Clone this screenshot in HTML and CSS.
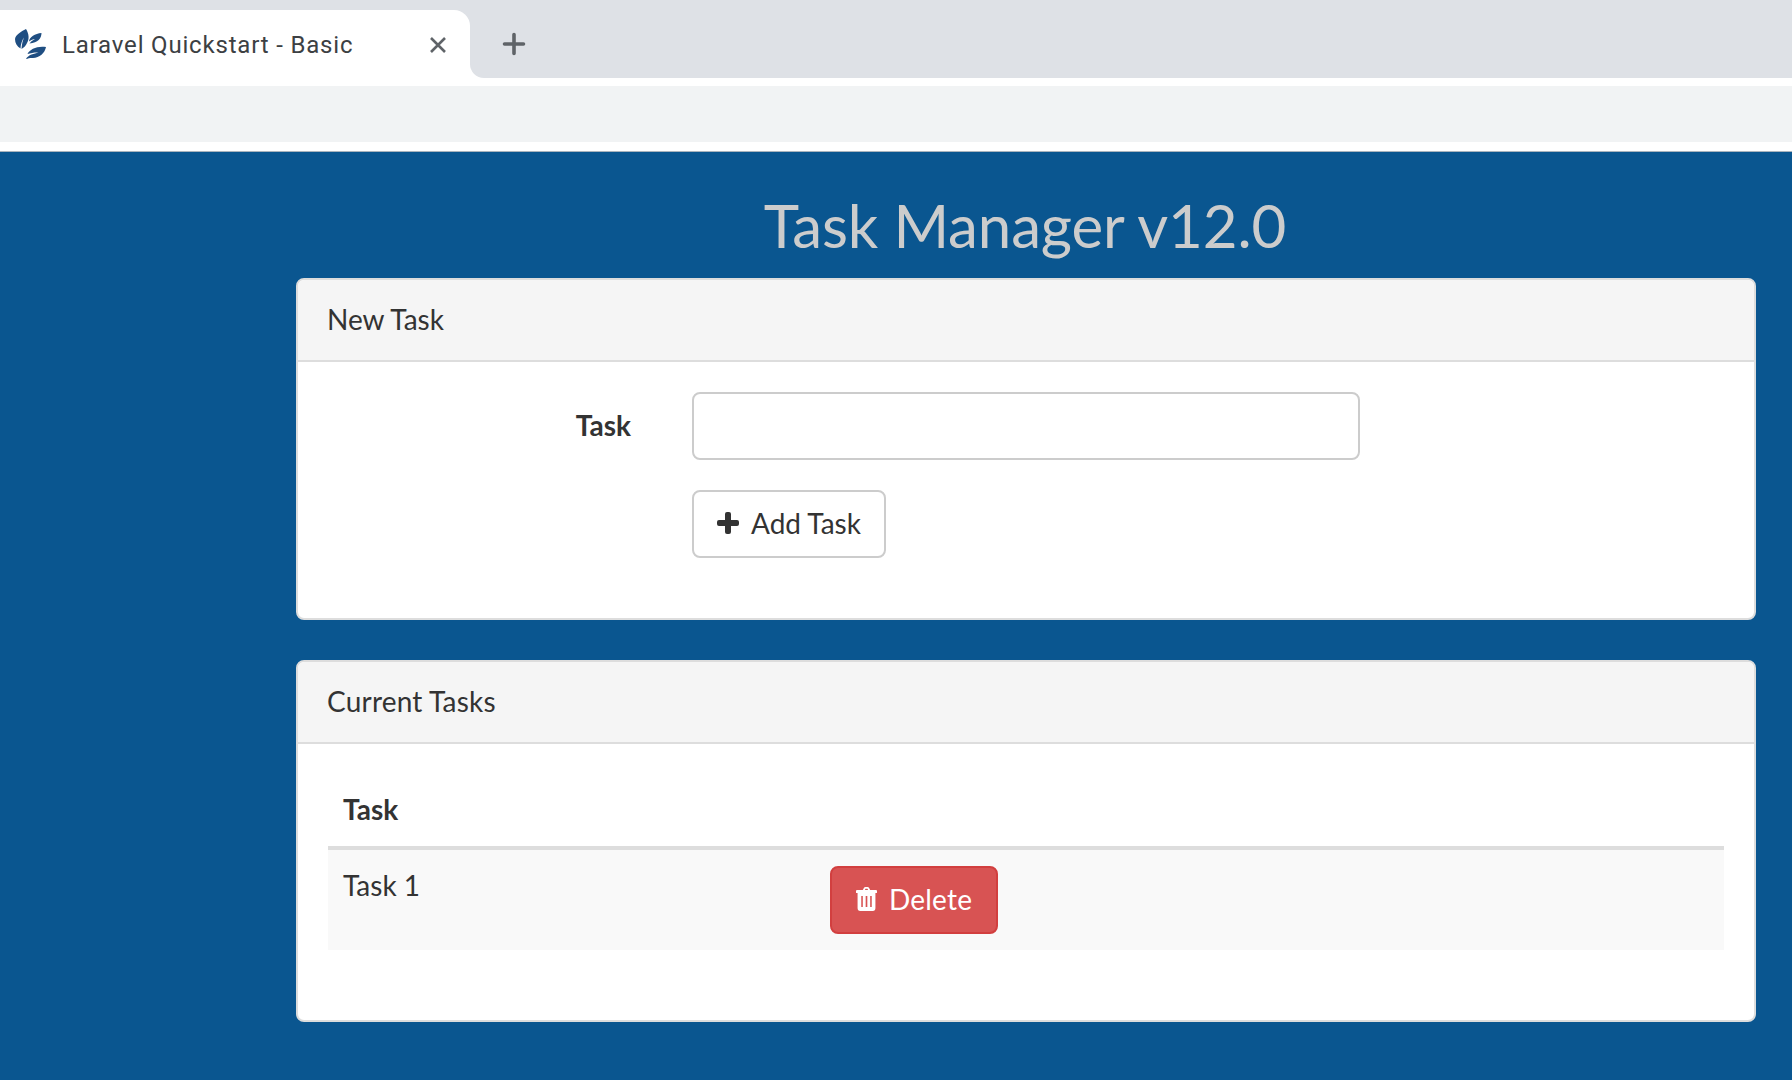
FILE: index.html
```html
<!DOCTYPE html>
<html lang="en">
<head>
    <meta charset="UTF-8">
    <title>Laravel Quickstart - Basic</title>
    <link rel="stylesheet" href="styles.css">
</head>
<body>
    <header class="browser">
        <div class="tabbar">
            <div class="tab-slot">
                <div class="tab">
                    <svg class="favicon" width="34" height="32" viewBox="0 0 34 32">
                        <path d="M12 0 C15 5 15.500 10 13 14 C12 16.500 10 18.500 7.500 20 C7.800 16 8.500 12 10 8.500 C8 11.500 6.800 15 6.500 19.500 C3 17.500 1 14 1 10 C1.500 6 7 2.500 12 0 Z"/>
                        <path d="M27.500 4 C27.500 9 24 14 15.500 14.500 C16.500 13 18 11.500 21 10 C19 10.200 17 11 15 12.500 C15.500 8 21 4.500 27.500 4 Z"/>
                        <path d="M32 18 C31 24 25 29.500 18 29 C15.500 29 14 29.500 12 30 C13 28 15 26.500 17.500 25.500 C20 24.800 22 24.300 24.500 23.500 C20.500 23.300 17 24 13.500 25 C15.500 20 24 16.500 32 18 Z"/>
                    </svg>
                    <span class="tab-title">Laravel Quickstart - Basic</span>
                    <svg class="tab-close" width="18" height="18" viewBox="0 0 18 18">
                        <path d="M2 2 L16 16 M16 2 L2 16"/>
                    </svg>
                </div>
            </div>
            <div class="tab-rest">
                <svg class="tab-new" width="26" height="26" viewBox="0 0 26 26">
                    <path d="M13 3.500 V22.500 M3.500 13 H22.500"/>
                </svg>
            </div>
        </div>
        <div class="toolbar"></div>
    </header>

    <main class="page">
        <h1 class="title">Task Manager v12.0</h1>

        <section class="panel">
            <div class="panel-heading">New Task</div>
            <div class="panel-body">
                <form class="task-form">
                    <label class="task-label" for="task">Task</label>
                    <input class="task-input" type="text" id="task">
                    <button class="btn btn-default task-add" type="button">
                        <svg class="icon" width="22" height="22" viewBox="0 0 22 22">
                            <path d="M8 2 Q8 0 10 0 H12 Q14 0 14 2 V8 H20 Q22 8 22 10 V12 Q22 14 20 14 H14 V20 Q14 22 12 22 H10 Q8 22 8 20 V14 H2 Q0 14 0 12 V10 Q0 8 2 8 H8 Z"/>
                        </svg>
                        Add Task
                    </button>
                </form>
            </div>
        </section>

        <section class="panel">
            <div class="panel-heading panel-heading-wide">Current Tasks</div>
            <div class="panel-body">
                <table class="table">
                    <thead>
                        <tr>
                            <th class="col-name">Task</th>
                            <th></th>
                        </tr>
                    </thead>
                    <tbody>
                        <tr>
                            <td>Task 1</td>
                            <td class="col-action">
                                <button class="btn btn-danger" type="button">
                                    <svg class="icon" width="21" height="24" viewBox="0 0 20 24" preserveAspectRatio="none">
                                        <path fill-rule="evenodd" d="M6.500 3 L7.500 1 Q8 0 9 0 H11 Q12 0 12.500 1 L13.500 3 H19 Q20 3 20 4 V5.500 Q20 6 19.500 6 H18.500 V21 Q18.500 24 16 24 H4 Q1.500 24 1.500 21 V6 H0.500 Q0 6 0 5.500 V4 Q0 3 1 3 Z M8.500 3 H11.500 L11 1.800 H9 Z M5 9 V20 H6.500 V9 Z M9.200 9 V20 H10.800 V9 Z M13.500 9 V20 H15 V9 Z"/>
                                    </svg>
                                    Delete
                                </button>
                            </td>
                        </tr>
                    </tbody>
                </table>
            </div>
        </section>
    </main>
</body>
</html>
```

FILE: styles.css
```css
html, body {
    margin: 0;
    padding: 0;
    height: 1080px;
    overflow: hidden;
}
body {
    display: flex;
    flex-direction: column;
    font-family: 'Lato', sans-serif;
    font-size: 28px;
    line-height: 40px;
    color: #333;
    background-color: #fff;
}

/* browser chrome */
.browser {
    flex: none;
    height: 151px;
    border-bottom: 1px solid #aab4bd;
}
.tabbar {
    display: flex;
    height: 86px;
}
.tab-slot {
    flex: none;
    width: 470px;
    height: 86px;
    box-sizing: border-box;
    padding-top: 10px;
    background-color: #dee1e6;
}
.tab {
    display: flex;
    align-items: center;
    height: 76px;
    padding-bottom: 6px;
    box-sizing: border-box;
    background-color: #fff;
    border-radius: 0 16px 0 0;
}
.favicon {
    flex: none;
    margin-left: 14px;
    fill: #1f4e82;
}
.tab-title {
    flex: 1;
    margin-left: 14px;
    font-family: 'Roboto', sans-serif;
    font-size: 24px;
    line-height: 32px;
    letter-spacing: 0.82px;
    color: #3c4043;
}
.tab-close {
    flex: none;
    margin-right: 23px;
    fill: none;
    stroke: #5f6368;
    stroke-width: 2.6;
}
.tab-rest {
    flex: 1;
    display: flex;
    align-items: center;
    height: 78px;
    box-sizing: border-box;
    padding-top: 9px;
    background-color: #dee1e6;
    border-radius: 0 0 0 14px;
}
.tab-new {
    margin-left: 31px;
    fill: none;
    stroke: #5f6368;
    stroke-width: 3.6;
    stroke-linecap: round;
}
.toolbar {
    height: 56px;
    background-color: #f1f3f4;
}

/* page */
.page {
    flex: 1;
    padding: 0 36px 0 296px;
    background-color: #0a5690;
}
.title {
    margin: 0;
    height: 126px;
    box-sizing: border-box;
    padding: 40px 2px 0 0;
    font-size: 60px;
    font-weight: 400;
    line-height: 66px;
    letter-spacing: -0.12px;
    text-align: center;
    color: #ccc;
}
.panel {
    margin-bottom: 40px;
    border: 2px solid #ddd;
    border-radius: 8px;
    background-color: #fff;
    overflow: hidden;
}
.panel-heading {
    padding: 19px 30px 21px 29px;
    background-color: #f5f5f5;
    border-bottom: 2px solid #ddd;
}
.panel-heading-wide {
    letter-spacing: 0.2px;
}
.panel-body {
    padding: 30px;
}

/* new task form */
.task-form {
    display: grid;
    grid-template-columns: 303px 668px;
    column-gap: 61px;
    row-gap: 30px;
    padding-bottom: 30px;
}
.task-label {
    align-self: center;
    padding-bottom: 2px;
    font-weight: 700;
    text-align: right;
}
.task-input {
    height: 68px;
    box-sizing: border-box;
    border: 2px solid #ccc;
    border-radius: 8px;
    background-color: #fff;
}
.task-add {
    grid-column: 2;
    justify-self: start;
}

.btn {
    display: inline-flex;
    align-items: center;
    gap: 12px;
    height: 68px;
    padding: 0 23px 2px;
    font-family: inherit;
    font-size: 28px;
    line-height: 40px;
    border: 2px solid #ccc;
    border-radius: 8px;
}
.btn-default {
    color: #333;
    background-color: #fff;
    fill: #333;
}
.btn-danger {
    padding: 0 24px 2px;
    letter-spacing: 0.2px;
    color: #fff;
    background-color: #d85353;
    border-color: #d23f3f;
    fill: #fff;
}
.icon {
    flex: none;
}

/* task table */
.table {
    width: 100%;
    border-collapse: collapse;
    margin-bottom: 40px;
}
.table th {
    padding: 15px 16px 17px 15px;
    font-weight: 700;
    text-align: left;
    border-bottom: 4px solid #ddd;
}
.table td {
    padding: 15px 16px 17px 15px;
    vertical-align: top;
    background-color: #f9f9f9;
}
.table .col-action {
    padding: 16px;
}
.col-name {
    width: 455px;
}
```
